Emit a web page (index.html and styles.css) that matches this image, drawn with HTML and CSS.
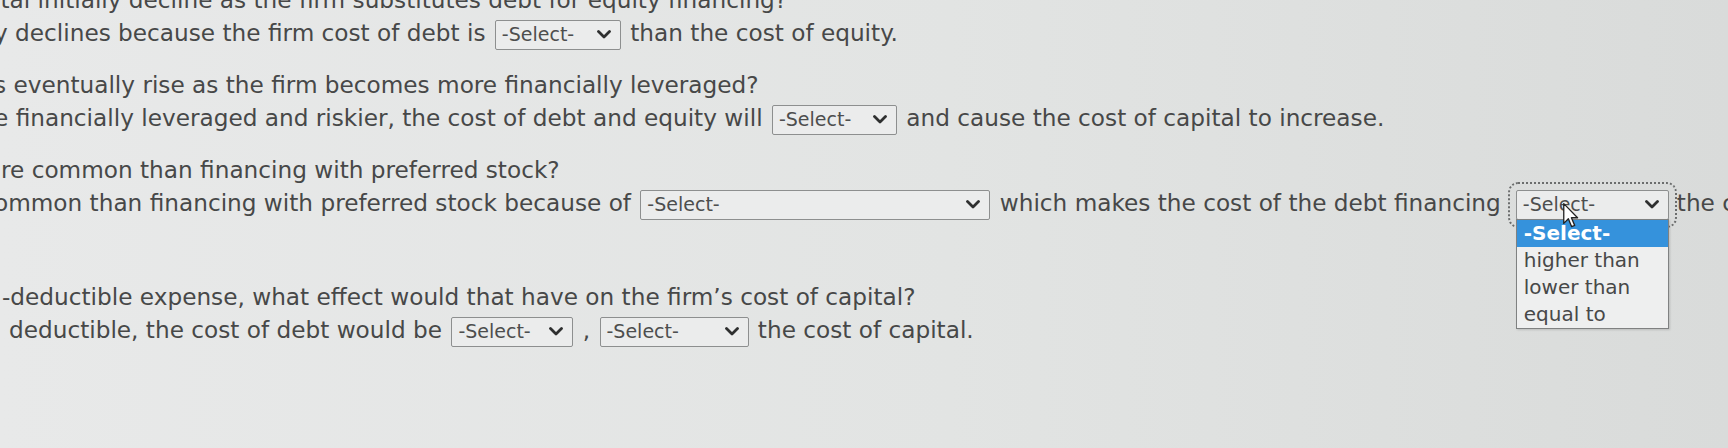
FILE: index.html
```html
<!DOCTYPE html>
<html lang="en">
<head>
  <meta charset="UTF-8">
  <title>Cost of Capital Questions</title>
  <link rel="stylesheet" href="styles.css">
</head>
<body>
  <div class="page">
    <div class="qa">
      <div class="line">ital initially decline as the firm substitutes debt for equity financing?</div>
      <div class="line">y declines because the firm cost of debt is
        <span class="pick" style="width:126px"><span>-Select-</span><svg viewBox="0 0 14 9"><path d="M1.5 1.5 L7 7 L12.5 1.5"/></svg></span>
        than the cost of equity.</div>
    </div>

    <div class="qa">
      <div class="line">s eventually rise as the firm becomes more financially leveraged?</div>
      <div class="line">e financially leveraged and riskier, the cost of debt and equity will
        <span class="pick" style="width:125px"><span>-Select-</span><svg viewBox="0 0 14 9"><path d="M1.5 1.5 L7 7 L12.5 1.5"/></svg></span>
        and cause the cost of capital to increase.</div>
    </div>

    <div class="qa">
      <div class="line in-s">re common than financing with preferred stock?</div>
      <div class="line">ommon than financing with preferred stock because of
        <span class="pick" style="width:350px"><span>-Select-</span><svg viewBox="0 0 14 9"><path d="M1.5 1.5 L7 7 L12.5 1.5"/></svg></span>
        which makes the cost of the debt financing<span class="pick open" style="width:153px"><span>-Select-</span><svg viewBox="0 0 14 9"><path d="M1.5 1.5 L7 7 L12.5 1.5"/></svg>
          <span class="options">
            <span class="opt active">-Select-</span>
            <span class="opt">higher than</span>
            <span class="opt">lower than</span>
            <span class="opt">equal to</span>
          </span>
          <svg class="cursor" viewBox="0 0 12 19"><path d="M0.5 0.5 L0.5 15.5 L4 12 L6.5 18 L8.8 17 L6.3 11.2 L11 11.2 Z"/></svg>
        </span>the cost of capital.</div>
    </div>

    <div class="qa last">
      <div class="line in-m">-deductible expense, what effect would that have on the firm’s cost of capital?</div>
      <div class="line in-l">deductible, the cost of debt would be
        <span class="pick" style="width:122px"><span>-Select-</span><svg viewBox="0 0 14 9"><path d="M1.5 1.5 L7 7 L12.5 1.5"/></svg></span>
        ,
        <span class="pick" style="width:149px"><span>-Select-</span><svg viewBox="0 0 14 9"><path d="M1.5 1.5 L7 7 L12.5 1.5"/></svg></span>
        the cost of capital.</div>
    </div>
  </div>
</body>
</html>
```

FILE: styles.css
```css
html, body { margin: 0; height: 100%; }
body { background: linear-gradient(90deg, #e8e9e9 0%, #e2e4e3 55%, #d9dbda 100%); overflow: hidden; }
.page { font-family: "DejaVu Sans", Verdana, sans-serif; font-size: 23.2px; color: #474848; margin: -17px 0 0 -6px; white-space: nowrap; }
.qa { margin-bottom: 19px; }
.qa.last { margin-top: 61px; }
.line { line-height: 33px; height: 33px; }
.in-s { padding-left: 7px; }
.in-m { padding-left: 8px; }
.in-l { padding-left: 15px; }
.pick { position: relative; display: inline-flex; align-items: center; justify-content: space-between; box-sizing: border-box; height: 30px; padding: 0 9px 0 6px; margin: 0 2px; vertical-align: middle; border: 1px solid #8d8f8f; border-radius: 2px; background: #ebecec; font-size: 19px; color: #4d4e4e; line-height: 1; }
.pick svg { width: 14px; height: 9px; fill: none; stroke: #2e2f2f; stroke-width: 2.8; stroke-linecap: round; stroke-linejoin: round; }
.pick.open { outline: 2px dotted #6b6d6d; outline-offset: 6px; margin: 0 8px 0 15px; }
.options { position: absolute; top: 100%; left: -1px; width: 100%; display: flex; flex-direction: column; background: #eeefef; border: 1px solid #7f8181; box-shadow: 1px 1px 2px rgba(0,0,0,.15); font-size: 20px; color: #474848; }
.opt { height: 27px; line-height: 27px; padding-left: 7px; }
.opt.active { background: #3592dc; color: #fff; font-weight: bold; }
.pick .cursor { position: absolute; left: 46px; top: 12px; width: 16px; height: 25px; fill: #fff; stroke: #222; stroke-width: 1; stroke-linejoin: round; }
```
